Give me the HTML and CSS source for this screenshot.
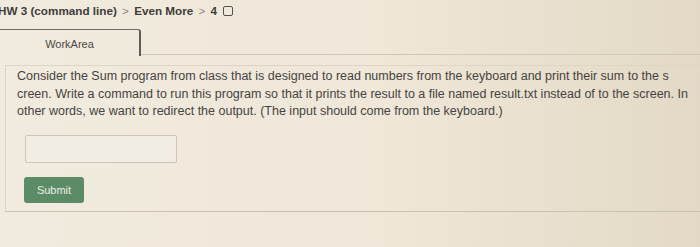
FILE: index.html
```html
<!DOCTYPE html>
<html>
<head>
<meta charset="utf-8">
<link rel="stylesheet" href="styles.css">
</head>
<body>
<div class="page">
  <div class="crumbs">HW 3 (command line) <span class="sep">&gt;</span> Even More <span class="sep">&gt;</span> 4 <span class="box"></span></div>
  <div class="tabs">
    <div class="tab">WorkArea</div>
    <div class="tabline"></div>
  </div>
  <div class="panel">
    <p class="question">Consider the Sum program from class that is designed to read numbers from the keyboard and print their sum to the s<br>creen. Write a command to run this program so that it prints the result to a file named result.txt instead of to the screen. In<br>other words, we want to redirect the output. (The input should come from the keyboard.)</p>
    <div class="answer"></div>
    <button class="submit">Submit</button>
  </div>
</div>
</body>
</html>
```
FILE: styles.css
```css
html, body {
  margin: 0;
  padding: 0;
}
body {
  width: 700px;
  height: 247px;
  overflow: hidden;
  background: linear-gradient(90deg, #f1ebdf 0%, #efe7d8 55%, #e3d9c6 100%);
  font-family: "Liberation Sans", Arial, sans-serif;
  color: #45433f;
}
.page {
  padding-top: 2px;
}
.crumbs {
  font-weight: bold;
  font-size: 11.7px;
  margin-left: -2px;
  height: 18px;
  line-height: 18px;
  color: #3f3d3a;
  white-space: nowrap;
}
.sep {
  color: #8a8782;
  font-weight: normal;
  margin: 0 2px;
}
.box {
  display: inline-block;
  vertical-align: -1px;
  width: 8px;
  height: 8px;
  margin-left: 3px;
  border: 1.5px solid #55524d;
  border-radius: 2px;
}
.tabs {
  display: flex;
  align-items: flex-end;
  margin-top: 9px;
}
.tab {
  width: 139px;
  height: 26px;
  line-height: 28px;
  text-align: center;
  font-size: 11px;
  color: #4a4844;
  border-top: 1px solid #6f6c66;
  border-right: 2px solid #5f5c57;
  border-top-right-radius: 3px;
}
.tabline {
  flex: 1;
  border-bottom: 1px solid #cfc8b9;
  margin-bottom: 1px;
}
.panel {
  margin: 9px 0 0 5px;
  border-top: 1px solid #ddd6c7;
  border-left: 1px solid #ddd6c7;
  border-bottom: 1px solid #c9c2b3;
  height: 147px;
  padding: 0 0 0 11px;
  box-sizing: border-box;
}
.question {
  margin: 2px 0 0 0;
  font-size: 12.5px;
  line-height: 17.5px;
  color: #46443f;
  white-space: nowrap;
}
.answer {
  margin: 14px 0 0 8px;
  width: 150px;
  height: 26px;
  border: 1px solid #cdc6b8;
  border-radius: 2px;
  background: #f2ede3;
}
.submit {
  display: block;
  margin: 14px 0 0 7px;
  width: 60px;
  height: 26px;
  border: none;
  border-radius: 3px;
  background: #5b8c67;
  color: #e8efe6;
  font-family: "Liberation Sans", Arial, sans-serif;
  font-size: 11px;
  padding: 0;
}
```
